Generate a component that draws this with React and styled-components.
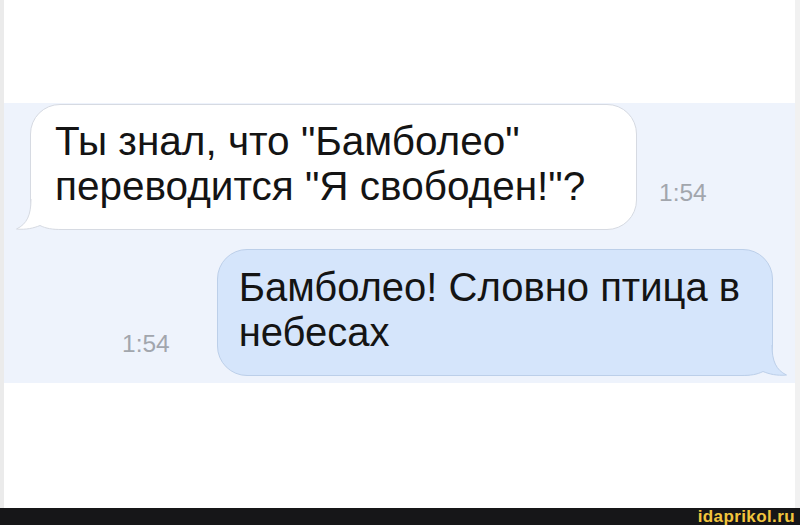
import React from "react";
import styled, { createGlobalStyle } from "styled-components";

const Global = createGlobalStyle`
  html, body { margin: 0; padding: 0; background: #fff; }
  body { font-family: "Liberation Sans", Arial, sans-serif; }
`;

const Page = styled.div`
  width: 800px;
  height: 525px;
  display: flex;
  flex-direction: column;
  overflow: hidden;
`;

const Frame = styled.div`
  flex: 1;
  display: flex;
  flex-direction: column;
  border-left: 4px solid #ebebeb;
  border-right: 5px solid #f1f1f1;
  background: #fff;
`;

const TopSpace = styled.div`
  height: 103px;
`;

const Band = styled.div`
  height: 280px;
  box-sizing: border-box;
  background: #eef3fc;
  padding: 1px 0 0 26px;
  display: flex;
  flex-direction: column;
  gap: 19px;
`;

const Row = styled.div`
  display: flex;
  align-items: flex-end;
  gap: ${(p) => p.$gap}px;
  padding-left: ${(p) => p.$indent || 0}px;
`;

const Bubble = styled.div`
  position: relative;
  box-sizing: border-box;
  width: ${(p) => p.$w}px;
  padding: ${(p) => p.$pad};
  border-radius: 30px;
  background: ${(p) => p.$bg};
  border: 1px solid ${(p) => p.$line};
  color: #141414;
  font-size: ${(p) => p.$size}px;
  line-height: 45px;
`;

const Line = styled.div`
  position: relative;
  z-index: 1;
  white-space: nowrap;
`;

const Time = styled.div`
  color: #a2a6ad;
  font-size: 24.5px;
  line-height: 26px;
  padding-bottom: ${(p) => p.$bottom}px;
`;

const TailSvg = styled.svg`
  position: absolute;
  z-index: 0;
  bottom: -1px;
  width: 46px;
  height: 31px;
  ${(p) => (p.$right ? "right: -15px; transform: scaleX(-1);" : "left: -15px;")}
`;

const BottomSpace = styled.div`
  flex: 1;
`;

const Footer = styled.div`
  height: 17px;
  background: #161618;
  display: flex;
  justify-content: flex-end;
  align-items: center;
  padding-right: 5px;
`;

const Brand = styled.span`
  color: #f2c53d;
  font-family: "Liberation Sans", Arial, sans-serif;
  font-weight: 700;
  font-size: 17px;
  line-height: 17px;
  letter-spacing: 0.4px;
`;

function Tail({ right, bg, line }) {
  return (
    <TailSvg $right={right} viewBox="0 0 46 31">
      <path
        d="M15,0 C15,16 11,25 0.5,30 C10,31 18,29 24,26.5 C30,29.5 36,30.5 46,30.5 L46,0 Z"
        fill={bg}
      />
      <path
        d="M15,0 C15,16 11,25 0.5,30 C10,31 18,29 24,26.5 C30,29.5 36,30.5 46,30.5"
        fill="none"
        stroke={line}
        strokeWidth="1"
      />
    </TailSvg>
  );
}

export default function App() {
  return (
    <Page>
      <Global />
      <Frame>
        <TopSpace />
        <Band>
          <Row $gap={22}>
            <Bubble $w={607} $size={40.5} $pad="14px 10px 20px 24px" $bg="#ffffff" $line="#d6dae2">
              <Line>Ты знал, что "Бамболео"</Line>
              <Line>переводится "Я свободен!"?</Line>
              <Tail bg="#ffffff" line="#d6dae2" />
            </Bubble>
            <Time $bottom={24}>1:54</Time>
          </Row>
          <Row $gap={47} $indent={92}>
            <Time $bottom={19}>1:54</Time>
            <Bubble $w={556} $size={40} $pad="15px 10px 20px 21px" $bg="#d5e5fb" $line="#bccfe9">
              <Line>Бамболео! Словно птица в</Line>
              <Line>небесах</Line>
              <Tail right bg="#d5e5fb" line="#bccfe9" />
            </Bubble>
          </Row>
        </Band>
        <BottomSpace />
      </Frame>
      <Footer>
        <Brand>idaprikol.ru</Brand>
      </Footer>
    </Page>
  );
}
